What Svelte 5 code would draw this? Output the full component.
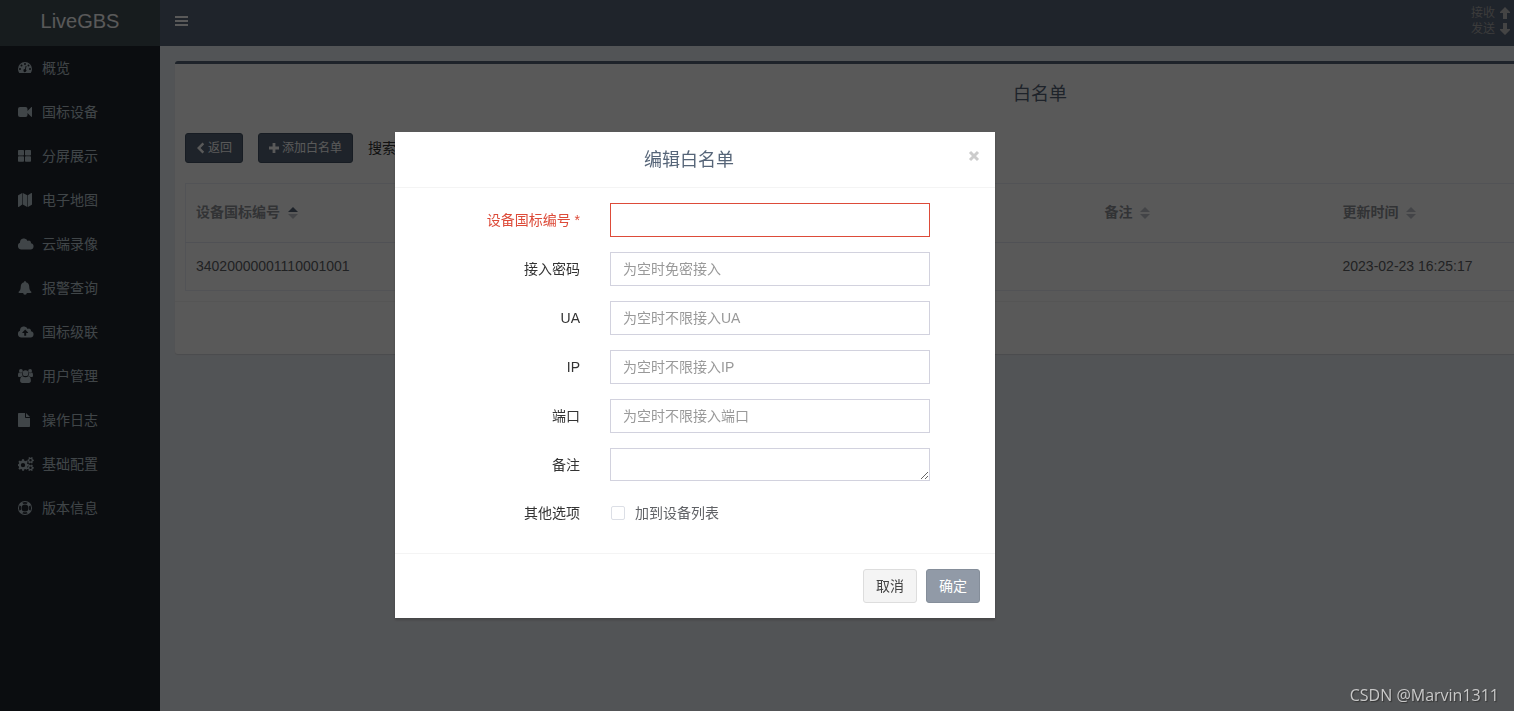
<script>
    let sidebarOpen = $state(true);
    let modalOpen = $state(true);
    let search = $state('');
    let form = $state({ serial: '', password: '', ua: '', ip: '', port: '', remark: '', toList: false });

    const menus = [
        { title: '概览', icon: 'M0 8a7 7 0 0 1 14 0c0 1.400-.4 2.700-1.100 3.700-.2.200-.4.300-.7.300H1.800c-.3 0-.5-.1-.7-.3C.4 10.700 0 9.400 0 8zM2 7a1 1 0 1 0 0 2 1 1 0 0 0 0-2zM3.500 3.500a1 1 0 1 0 0 2 1 1 0 0 0 0-2zM7 2a1 1 0 1 0 0 2 1 1 0 0 0 0-2zM10.500 3.500a1 1 0 1 0 0 2 1 1 0 0 0 0-2zM12 7a1 1 0 1 0 0 2 1 1 0 0 0 0-2zM7.700 4.800 6.900 8a1.500 1.500 0 1 0 .9.300l.8-3.300z' },
        { title: '国标设备', icon: 'M2 2h5.500a2 2 0 0 1 2 2v2l3.700-3.800c.3-.3.800-.1.800.3v9c0 .4-.5.600-.8.300L9.500 8v2a2 2 0 0 1-2 2H2a2 2 0 0 1-2-2V4a2 2 0 0 1 2-2z' },
        { title: '分屏展示', icon: 'M.8 1h4.400a.8.800 0 0 1 .8.800v3.900a.8.800 0 0 1-.8.800H.8a.8.800 0 0 1-.8-.8V1.800A.8.800 0 0 1 .8 1zM7.800 1h4.400a.8.800 0 0 1 .8.800v3.900a.8.800 0 0 1-.8.800H7.800a.8.800 0 0 1-.8-.8V1.800a.8.800 0 0 1 .8-.8zM.8 7.300h4.400a.8.800 0 0 1 .8.800V12a.8.800 0 0 1-.8.800H.8A.8.800 0 0 1 0 12V8.100a.8.800 0 0 1 .8-.8zM7.800 7.300h4.400a.8.800 0 0 1 .8.800V12a.8.800 0 0 1-.8.800H7.800A.8.800 0 0 1 7 12V8.100a.8.800 0 0 1 .8-.8z' },
        { title: '电子地图', icon: 'M4.200 0v11.600L.7 13.900c-.3.200-.7 0-.7-.4V2.700c0-.2.100-.3.200-.4zM4.800 0l4.500 2.300v11.600l-4.500-2.300zM13.300.1c.3-.2.700 0 .7.400v10.800c0 .2-.1.300-.2.400L9.900 14V2.300z' },
        { title: '云端录像', icon: 'M3.500 12.500A3.500 3.500 0 0 1 2 5.800V5.500a4 4 0 0 1 7.700-1.500A2 2 0 0 1 12.800 6.300 3.100 3.100 0 0 1 12 12.500z' },
        { title: '报警查询', icon: 'M7 0a.9.900 0 0 1 .9.900v.3c2.100.4 3.300 2.100 3.300 4.100 0 3.200.9 4.600 2.300 5.800 0 .5-.4.900-.9.900H8.800a1.800 1.800 0 0 1-3.600 0H1.400a.9.900 0 0 1-.9-.9c1.400-1.200 2.300-2.600 2.300-5.800 0-2 1.200-3.700 3.300-4.100V.9A.9.900 0 0 1 7 0z' },
        { title: '国标级联', icon: 'M3.500 12.500A3.500 3.500 0 0 1 2 5.800V5.500a4 4 0 0 1 7.700-1.500A2 2 0 0 1 12.800 6.300 3.100 3.100 0 0 1 12 12.500zM7.200 4.500 4.300 7.500v.4h1.900v2.800h2V7.900h1.900v-.4z' },
        { title: '用户管理', icon: 'M2.900 0a1.900 1.900 0 1 1 0 3.800 1.900 1.900 0 0 1 0-3.800zM12.100 0a1.900 1.900 0 1 1 0 3.800 1.900 1.900 0 0 1 0-3.800zM7.500 1.300a2.900 2.900 0 1 1 0 5.800 2.900 2.900 0 0 1 0-5.800zM1 3.600c.6.500 2 .8 3 .5-.1 1.200.2 2.100.7 2.900-.9 0-1.700.4-2.300 1H1.300C.5 8 0 7.500 0 6.700c0-1 .1-2.600 1-3.100zM14 3.600c-.6.500-2 .8-3 .5.1 1.200-.2 2.100-.7 2.900.9 0 1.700.4 2.300 1h1.100c.8 0 1.300-.5 1.300-1.300 0-1-.1-2.600-1-3.100zM4.700 7.200c1.500 1.300 4.100 1.300 5.600 0 2 0 2.600 2.600 2.600 4.600 0 1.300-.8 2.200-2.100 2.200H4.200c-1.300 0-2.100-.9-2.100-2.200 0-2 .6-4.600 2.600-4.600z' },
        { title: '操作日志', icon: 'M.8 0H7v4.200c0 .5.300.8.800.8H12v8.200c0 .5-.3.800-.8.800H.8c-.5 0-.8-.3-.8-.8V.8C0 .3.300 0 .8 0zM8 0l4 4H8z' },
        { title: '基础配置', icon: 'M4 2.300h2l.3 1.400 1 .5 1.200-.8 1.300 1.300-.8 1.200.4 1 1.500.3v1.700L9.400 9.200l-.4 1 .8 1.200-1.300 1.300-1.200-.8-1 .4L6 13.800H4.200l-.3-1.500-1-.4-1.200.8-1.300-1.300.8-1.200-.4-1L0 8.900V7.200l.8-.3.400-1-.8-1.200 1.300-1.300 1.200.8.800-.5zM5 5.900a2.200 2.200 0 1 0 0 4.400 2.200 2.200 0 0 0 0-4.400zM11.300 0l.9.800h.8l.8-.7 1 .7-.4 1 .4.700 1 .2v1.200l-1 .3-.4.700.3 1-1 .6-.7-.8h-.9l-.7.800-1-.6.3-1-.4-.7-.8-.3V2.700l.9-.2.400-.7-.3-1zM12.500 2.100a1.200 1.200 0 1 0 0 2.400 1.200 1.200 0 0 0 0-2.400zM11.300 7.500l.9.800h.8l.8-.7 1 .7-.4 1 .4.700 1 .2v1.200l-1 .3-.4.700.3 1-1 .6-.7-.8h-.9l-.7.800-1-.6.3-1-.4-.7-.8-.3v-1.200l.9-.2.400-.7-.3-1zM12.500 9.600a1.200 1.200 0 1 0 0 2.400 1.200 1.200 0 0 0 0-2.400z' },
        { title: '版本信息', icon: 'M7 0a7 7 0 1 1 0 14A7 7 0 0 1 7 0zM7 3.500a3.500 3.500 0 1 0 0 7 3.500 3.500 0 0 0 0-7zM4.200 1.700l1.400 1.400a4.300 4.300 0 0 1 2.800 0l1.400-1.400a6 6 0 0 0-5.600 0zM4.200 12.300l1.400-1.400a4.300 4.300 0 0 0 2.800 0l1.400 1.400a6 6 0 0 1-5.600 0zM1.700 4.200l1.400 1.400a4.300 4.300 0 0 0 0 2.800L1.700 9.800a6 6 0 0 1 0-5.600zM12.300 4.200l-1.400 1.400a4.300 4.300 0 0 1 0 2.800l1.400 1.400a6 6 0 0 0 0-5.600z' }
    ];

    const columns = [
        { title: '设备国标编号', cls: 'col-serial', sort: 'asc' },
        { title: '备注', cls: 'col-remark', sort: '' },
        { title: '更新时间', cls: 'col-time', sort: '' }
    ];
    const rows = [{ serial: '34020000001110001001', remark: '', time: '2023-02-23 16:25:17' }];

    const fields = [
        { key: 'password', label: '接入密码', placeholder: '为空时免密接入' },
        { key: 'ua', label: 'UA', placeholder: '为空时不限接入UA' },
        { key: 'ip', label: 'IP', placeholder: '为空时不限接入IP' },
        { key: 'port', label: '端口', placeholder: '为空时不限接入端口' }
    ];

    const close = () => modalOpen = false;
</script>

<div class="wrapper">
    {#if sidebarOpen}
    <aside class="sidebar">
        <a class="logo" href="#/">LiveGBS</a>
        <nav>
            {#each menus as menu}
            <a class="menu" href="#/">
                <svg viewBox="0 0 16 14" width="16" height="14" aria-hidden="true"><path fill-rule="evenodd" d={menu.icon} /></svg>
                <span>{menu.title}</span>
            </a>
            {/each}
        </nav>
    </aside>
    {/if}

    <div class="main">
        <header class="navbar">
            <button class="toggle" aria-label="menu" onclick={() => sidebarOpen = !sidebarOpen}>
                <svg viewBox="0 0 13 10" width="13" height="10"><path d="M0 0h13v2H0zM0 4h13v2H0zM0 8h13v2H0z" /></svg>
            </button>
            <div class="traffic">
                <div>接收 <svg viewBox="0 0 10 12" width="10" height="12"><path d="M5 0l5 5v1H7v6H3V6H0V5z" /></svg></div>
                <div>发送 <svg viewBox="0 0 10 12" width="10" height="12"><path d="M5 12l5-5V6H7V0H3v6H0v1z" /></svg></div>
            </div>
        </header>

        <section class="content">
            <div class="box">
                <h4 class="box-title">白名单</h4>
                <div class="box-body">
                    <div class="tools">
                        <button class="btn btn-sm btn-primary">
                            <svg viewBox="0 0 9 12" width="9" height="12"><path d="M6.500.5l1.700 1.700L4.500 6l3.700 3.800-1.700 1.700L1 6z" /></svg>
                            返回
                        </button>
                        <button class="btn btn-sm btn-primary">
                            <svg viewBox="0 0 10 10" width="10" height="10"><path d="M3.600 0h2.800v3.600H10v2.800H6.400V10H3.600V6.400H0V3.600h3.600z" /></svg>
                            添加白名单
                        </button>
                        <label class="search">搜索 <input type="text" bind:value={search} /></label>
                    </div>
                    <table>
                        <thead>
                            <tr>
                                {#each columns as col}
                                <th class={col.cls}>
                                    {col.title}
                                    <svg class="caret {col.sort}" viewBox="0 0 10 12" width="10" height="12">
                                        <path class="up" d="M5 0l5 5H0z" />
                                        <path class="down" d="M5 12l5-5H0z" />
                                    </svg>
                                </th>
                                {/each}
                            </tr>
                        </thead>
                        <tbody>
                            {#each rows as row}
                            <tr>
                                <td>{row.serial}</td>
                                <td>{row.remark}</td>
                                <td>{row.time}</td>
                            </tr>
                            {/each}
                        </tbody>
                    </table>
                </div>
                <div class="box-footer"></div>
            </div>
        </section>
    </div>
</div>

{#if modalOpen}
<div class="backdrop">
    <form class="modal" role="dialog" aria-labelledby="modal-title" onsubmit={(e) => e.preventDefault()}>
        <div class="modal-header">
            <h4 id="modal-title">编辑白名单</h4>
            <button type="button" class="close" aria-label="close" onclick={close}>
                <svg viewBox="0 0 12 12" width="12" height="12"><path d="M2 2l8 8M10 2l-8 8" /></svg>
            </button>
        </div>
        <div class="modal-body">
            <div class="form-group has-error">
                <label for="serial">设备国标编号 *</label>
                <input id="serial" type="text" bind:value={form.serial} />
            </div>
            {#each fields as field}
            <div class="form-group">
                <label for={field.key}>{field.label}</label>
                <input id={field.key} type="text" placeholder={field.placeholder} bind:value={form[field.key]} />
            </div>
            {/each}
            <div class="form-group">
                <label for="remark">备注</label>
                <textarea id="remark" rows="1" bind:value={form.remark}></textarea>
            </div>
            <div class="form-group">
                <span class="label">其他选项</span>
                <label class="check"><input type="checkbox" bind:checked={form.toList} />加到设备列表</label>
            </div>
        </div>
        <div class="modal-footer">
            <button type="button" class="btn btn-default" onclick={close}>取消</button>
            <button type="submit" class="btn btn-primary" disabled={!form.serial}>确定</button>
        </div>
    </form>
</div>
{/if}

<div class="watermark">CSDN @Marvin1311</div>

<style>
    :global(body) {
        margin: 0;
        overflow: hidden;
        background: #ecf0f5;
        color: #333;
        font: 14px/20px "Liberation Sans", "Noto Sans CJK SC", sans-serif;
    }
    * {
        box-sizing: border-box;
    }
    svg {
        fill: currentColor;
        flex: none;
    }
    button, input, textarea {
        font: inherit;
    }
    h4 {
        margin: 0;
        font-size: 18px;
        font-weight: 400;
        color: #566578;
        text-align: center;
    }

    .wrapper {
        display: flex;
        min-height: 100vh;
    }
    .sidebar {
        flex: none;
        width: 160px;
        background: #222630;
    }
    .logo {
        display: block;
        height: 46px;
        line-height: 42px;
        background: #425058;
        color: #fff;
        font-size: 20px;
        text-align: center;
        text-decoration: none;
    }
    .menu {
        display: flex;
        align-items: center;
        gap: 8px;
        height: 44px;
        padding-left: 18px;
        color: #b8c7ce;
        text-decoration: none;
    }

    .main {
        flex: 1;
        min-width: 0;
        overflow: hidden;
    }
    .navbar {
        display: flex;
        justify-content: space-between;
        height: 46px;
        background: #5a677c;
    }
    .toggle {
        height: 42px;
        padding: 0 15px;
        border: 0;
        background: none;
        color: #fff;
        display: flex;
        align-items: center;
    }
    .traffic {
        padding: 5px 4px 0 0;
        color: #aaa;
        font-size: 12px;
        line-height: 16px;
    }
    .traffic div {
        display: flex;
        align-items: center;
        gap: 5px;
    }
    .traffic svg {
        color: #c4c4c4;
    }

    .content {
        padding: 15px;
    }
    /* the table is wider than most windows, the rest is cut off */
    .box {
        min-width: 1730px;
        border-top: 3px solid #566578;
        border-radius: 3px;
        background: #fff;
        box-shadow: 0 1px 1px rgba(0, 0, 0, .1);
    }
    .box-title {
        padding: 20px 10px 19px;
    }
    .box-body {
        padding: 10px;
    }
    .tools {
        display: flex;
        align-items: center;
        gap: 15px;
        margin-bottom: 20px;
    }
    .search input {
        width: 200px;
        height: 30px;
        margin-left: 10px;
        border: 1px solid #d2d6de;
    }
    .btn {
        display: inline-flex;
        align-items: center;
        gap: 3px;
        padding: 6px 12px;
        border: 1px solid #ddd;
        border-radius: 3px;
    }
    .btn-sm {
        padding: 4px 10px;
        font-size: 12px;
    }
    .btn-primary {
        background: #566578;
        border-color: #445264;
        color: #fff;
    }
    .btn-primary:disabled {
        opacity: .65;
    }
    .btn-default {
        background: #f4f4f4;
        color: #444;
    }

    table {
        width: 100%;
        border: 1px solid #ebeef5;
        border-collapse: collapse;
        table-layout: fixed;
    }
    th {
        height: 59px;
        padding: 0 10px 2px;
        border-bottom: 1px solid #e6e8f2;
        color: #909399;
        text-align: left;
    }
    td {
        height: 48px;
        padding: 0 10px 2px;
        color: #606266;
    }
    .col-serial {
        width: 909px;
    }
    .col-remark {
        width: 238px;
    }
    .caret {
        margin-left: 4px;
        vertical-align: -2px;
        color: #c0c4cc;
    }
    .asc .up {
        fill: #566578;
    }
    .box-footer {
        height: 53px;
        border-top: 1px solid #f4f4f4;
    }

    .backdrop {
        position: fixed;
        inset: 0;
        display: flex;
        align-items: flex-start;
        justify-content: center;
        padding: 132px 124px 0 0;
        background: rgba(0, 0, 0, .65);
    }
    .modal {
        width: 600px;
        background: #fff;
        box-shadow: 0 2px 3px rgba(0, 0, 0, .2);
    }
    .modal-header {
        display: flex;
        align-items: flex-start;
        padding: 16px 15px 14px;
        border-bottom: 1px solid #f4f4f4;
    }
    .modal-header h4 {
        flex: 1;
        line-height: 25px;
    }
    .close {
        padding: 2px 0;
        border: 0;
        background: none;
        display: flex;
    }
    .close path {
        stroke: #ccc;
        stroke-width: 3;
    }
    .modal-body {
        padding: 15px 0 8px;
    }
    .form-group {
        display: grid;
        grid-template-columns: 185px 320px;
        column-gap: 30px;
        align-items: center;
        margin-bottom: 15px;
    }
    .form-group > label:first-child, .label {
        text-align: right;
    }
    .form-group > input, textarea {
        display: block;
        width: 100%;
        height: 34px;
        padding: 6px 12px;
        border: 1px solid #d2d2de;
        border-radius: 0;
        background: #fff;
        outline: none;
    }
    textarea {
        height: 33px;
        overflow: hidden;
        resize: vertical;
    }
    ::placeholder {
        color: #999;
    }
    .has-error label {
        color: #dd4b39;
    }
    .form-group.has-error > input {
        border-color: #dd4b39;
    }
    .check {
        display: flex;
        align-items: center;
        gap: 10px;
        height: 34px;
        color: #606266;
    }
    .check input {
        appearance: none;
        width: 14px;
        height: 14px;
        margin: 0 0 0 1px;
        border: 1px solid #dcdfe6;
        border-radius: 2px;
    }
    .check input:checked {
        background: #566578;
    }
    .modal-footer {
        display: flex;
        justify-content: flex-end;
        gap: 9px;
        padding: 15px;
        border-top: 1px solid #f4f4f4;
    }

    .watermark {
        position: fixed;
        right: 15px;
        bottom: 6px;
        color: #c8c8c8;
        font: 16px/20px "Open Sans", sans-serif;
        text-shadow: 1px 1px 1px #333;
    }
</style>
